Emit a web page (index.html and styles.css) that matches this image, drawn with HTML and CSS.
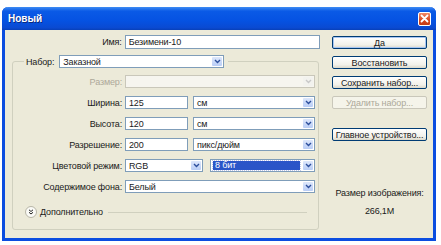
FILE: index.html
```html
<!DOCTYPE html>
<html lang="ru">
<head>
  <meta charset="UTF-8">
  <title>Новый</title>
  <link rel="stylesheet" href="styles.css">
</head>
<body>
  <div class="window">
    <div class="titlebar">
      <span class="title">Новый</span>
      <span class="close-btn">
        <svg width="9" height="9" viewBox="0 0 9 9"><path d="M1.5 1.5 L7.5 7.5 M7.5 1.5 L1.5 7.5" stroke="#fff" stroke-width="1.8" stroke-linecap="round"/></svg>
      </span>
    </div>
    <div class="dialog">
      <div class="left-col">
        <div class="row name-row">
          <span class="lbl">Имя:</span>
          <div class="field name-field">Безимени-10</div>
        </div>
        <fieldset class="group">
          <legend>
            <span class="lbl-inline">Набор:</span>
            <div class="select preset">Заказной<span class="arrow"><svg width="7" height="5" viewBox="0 0 7 5"><path d="M1 1 L3.5 3.5 L6 1" fill="none" stroke="#2d4f9c" stroke-width="1.4"/></svg></span></div>
          </legend>
          <div class="row">
            <span class="lbl disabled">Размер:</span>
            <div class="select wide disabled-box"><span class="arrow off"><svg width="7" height="5" viewBox="0 0 7 5"><path d="M1 1 L3.5 3.5 L6 1" fill="none" stroke="#c8c8c8" stroke-width="1.4"/></svg></span></div>
          </div>
          <div class="row">
            <span class="lbl">Ширина:</span>
            <div class="field num">125</div>
            <div class="select unit">см<span class="arrow"><svg width="7" height="5" viewBox="0 0 7 5"><path d="M1 1 L3.5 3.5 L6 1" fill="none" stroke="#2d4f9c" stroke-width="1.4"/></svg></span></div>
          </div>
          <div class="row">
            <span class="lbl">Высота:</span>
            <div class="field num">120</div>
            <div class="select unit">см<span class="arrow"><svg width="7" height="5" viewBox="0 0 7 5"><path d="M1 1 L3.5 3.5 L6 1" fill="none" stroke="#2d4f9c" stroke-width="1.4"/></svg></span></div>
          </div>
          <div class="row">
            <span class="lbl">Разрешение:</span>
            <div class="field num">200</div>
            <div class="select unit">пикс/дюйм<span class="arrow"><svg width="7" height="5" viewBox="0 0 7 5"><path d="M1 1 L3.5 3.5 L6 1" fill="none" stroke="#2d4f9c" stroke-width="1.4"/></svg></span></div>
          </div>
          <div class="row">
            <span class="lbl">Цветовой режим:</span>
            <div class="select mode">RGB<span class="arrow"><svg width="7" height="5" viewBox="0 0 7 5"><path d="M1 1 L3.5 3.5 L6 1" fill="none" stroke="#2d4f9c" stroke-width="1.4"/></svg></span></div>
            <div class="select bits"><span class="sel-text">8 бит</span><span class="arrow"><svg width="7" height="5" viewBox="0 0 7 5"><path d="M1 1 L3.5 3.5 L6 1" fill="none" stroke="#2d4f9c" stroke-width="1.4"/></svg></span></div>
          </div>
          <div class="row">
            <span class="lbl">Содержимое фона:</span>
            <div class="select wide">Белый<span class="arrow"><svg width="7" height="5" viewBox="0 0 7 5"><path d="M1 1 L3.5 3.5 L6 1" fill="none" stroke="#2d4f9c" stroke-width="1.4"/></svg></span></div>
          </div>
          <div class="advanced">
            <span class="chev">
              <svg width="6" height="6" viewBox="0 0 6 6"><path d="M1 0.8 L3 2.5 L5 0.8 M1 3.3 L3 5 L5 3.3" fill="none" stroke="#222" stroke-width="1"/></svg>
            </span>
            <span>Дополнительно</span>
            <span class="rule"></span>
          </div>
        </fieldset>
      </div>
      <div class="right-col">
        <button class="btn default">Да</button>
        <button class="btn">Восстановить</button>
        <button class="btn">Сохранить набор...</button>
        <button class="btn" disabled>Удалить набор...</button>
        <button class="btn device">Главное устройство...</button>
        <div class="size-label">Размер изображения:</div>
        <div class="size-value">266,1M</div>
      </div>
    </div>
  </div>
</body>
</html>
```

FILE: styles.css
```css
body {
  margin: 0;
  background: #ffffff;
  font-family: 'Liberation Sans', Arial, sans-serif;
  font-size: 9px;
  letter-spacing: -0.15px;
  color: #1a1a1a;
}
.window {
  margin: 7px 0 0 2px;
  width: 428px;
  border: 3px solid #0b4de0;
  border-top: none;
  border-radius: 6px 6px 0 0;
  background: #ecead9;
}
.titlebar {
  height: 23px;
  margin: 0 -3px;
  display: flex;
  align-items: center;
  justify-content: space-between;
  padding: 0 5px 0 6px;
  border-radius: 6px 6px 0 0;
  background: linear-gradient(#3f8cf3 0%, #0a5ae6 18%, #0552e2 60%, #0a4ad2 90%, #0840b8 100%);
}
.title {
  color: #fff;
  font-weight: bold;
  font-size: 10px;
  letter-spacing: 0;
  text-shadow: 1px 1px 0 #0a2a80;
}
.close-btn {
  width: 13px;
  height: 14px;
  box-sizing: border-box;
  border: 1px solid #fff;
  border-radius: 2px;
  background: linear-gradient(#f08a68, #d8461e 60%, #c23a14);
  display: flex;
  align-items: center;
  justify-content: center;
}

.dialog {
  display: flex;
  gap: 12px;
  padding: 5px 6px 8px 7px;
}
.left-col { width: 308px; }
.right-col {
  width: 95px;
  display: flex;
  flex-direction: column;
  padding-top: 1px;
}

.row {
  display: flex;
  align-items: center;
  height: 13px;
  margin-bottom: 8px;
}
.lbl {
  width: 109px;
  margin-right: 3px;
  text-align: right;
  white-space: nowrap;
}
.name-row { height: 14px; margin-bottom: 0; }
.name-row .lbl { width: 110px; }
.lbl.disabled { color: #aca899; }

.field, .select {
  box-sizing: border-box;
  height: 100%;
  border: 1px solid #7f9db9;
  background: #fff;
  padding: 0 3px;
  display: flex;
  align-items: center;
  white-space: nowrap;
}
.name-field { width: 196px; }
.num { width: 63px; margin-right: 5px; }

.select { position: relative; padding-right: 14px; }
.arrow {
  position: absolute;
  right: 1px;
  top: 1px;
  bottom: 1px;
  width: 10px;
  background: linear-gradient(#dde7fb, #b9cdf6);
  border-radius: 1px;
  display: flex;
  align-items: center;
  justify-content: center;
}
.arrow.off { background: #f2f2ee; }
.wide { width: 190px; }
.unit { width: 122px; }
.mode { width: 78px; margin-right: 7px; }
.bits { width: 105px; padding-left: 2px; }
.sel-text {
  flex: 1;
  background: #2a55c8;
  color: #fff;
  outline: 1px dotted #c0c8e8;
  padding: 0 2px;
  line-height: 9px;
}
.disabled-box { border-color: #c9c7ba; background: #f6f5ef; }

.group {
  margin: 6px 0 0 0;
  padding: 7px 3px 11px 0;
  width: 307px;
  box-sizing: border-box;
  border: 1px solid #d0d0bf;
  border-radius: 3px;
}
.group legend {
  margin-left: 11px;
  padding: 0 4px 0 2px;
  display: flex;
  align-items: center;
  height: 13px;
}
.lbl-inline { margin-right: 5px; }
.preset { width: 165px; }

.advanced {
  display: flex;
  align-items: center;
  margin-top: 13px;
  padding-left: 12px;
  height: 12px;
}
.chev {
  width: 10px;
  height: 10px;
  border: 1px solid #b8b6a8;
  border-radius: 50%;
  background: #fafaf6;
  display: flex;
  align-items: center;
  justify-content: center;
  margin-right: 3px;
}
.rule {
  flex: 1;
  height: 1px;
  background: #d0d0bf;
  margin: 0 8px 0 5px;
}

.btn {
  height: 13px;
  margin: 0 0 7px;
  padding: 0;
  font: inherit;
  letter-spacing: inherit;
  color: #1a1a1a;
  border: 1px solid #003c74;
  border-radius: 2px;
  background: linear-gradient(#ffffff, #f2f1ea 70%, #dcd9cb);
}
.btn.default { box-shadow: inset 0 0 0 1px #a8c6f2; }
.btn:disabled {
  color: #aca899;
  border-color: #c9c7ba;
  background: #f5f4ea;
}
.btn.device { margin-top: 12px; }
.size-label {
  margin-top: 39px;
  text-align: center;
  line-height: 12px;
}
.size-value {
  margin-top: 6px;
  text-align: center;
  line-height: 12px;
}
```
